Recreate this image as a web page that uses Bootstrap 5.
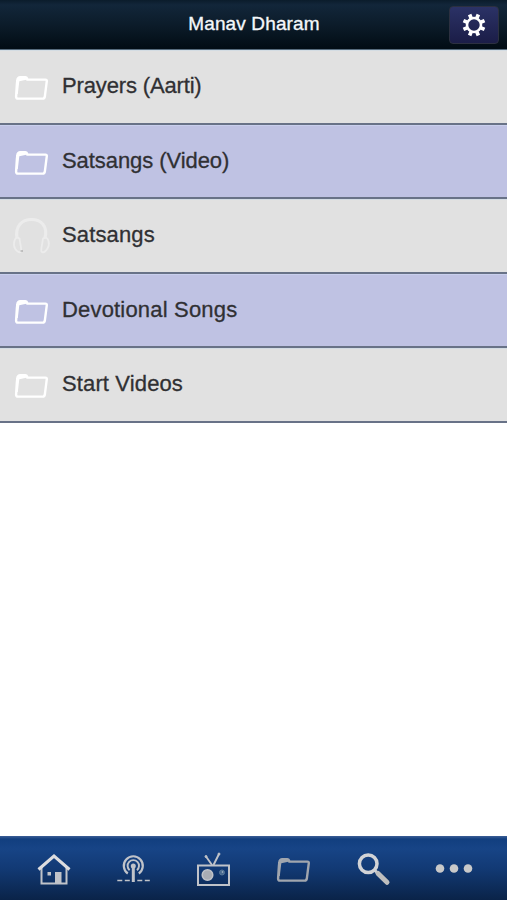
<!DOCTYPE html>
<html lang="en">
<head>
<meta charset="utf-8">
<meta name="viewport" content="width=device-width, initial-scale=1">
<title>Manav Dharam</title>
<link rel="stylesheet" href="https://cdn.jsdelivr.net/npm/bootstrap@5.3.0/dist/css/bootstrap.min.css">
<style>
body{font-family:"Liberation Sans",Arial,sans-serif;background:#fff}
.topbar{height:50px;display:grid;grid-template-columns:1fr auto 1fr;background:linear-gradient(#0b1c2b 0,#12263a 10%,#0c1c2a 50%,#020d15 97%);color:#f4f7fa;padding:0 8px 0 9px;border-bottom:1px solid #566b7c}
.topbar h1{font-size:19px;line-height:24px;letter-spacing:.13px;margin:0 0 2px;font-weight:400;-webkit-text-stroke:.35px}
.gear{width:50px;height:38px;padding:0;border:1px solid #2c3040;border-radius:4px;background:linear-gradient(#2b3266,#1b1d47)}
.menu-row{height:74.5px;padding:1px 0 0 13px;border:0;border-bottom:2px solid #687287;background:#e1e1e1;color:#303033;font-size:22px;line-height:28px;box-shadow:inset 0 1px #d3dce3}
.menu-row+.menu-row{border-top-width:0}
.menu-row span{margin:0 0 1px 12px;-webkit-text-stroke:.3px;letter-spacing:.13px}
.menu-row .snug{letter-spacing:-.15px}
.menu-row .even{letter-spacing:-.07px}
.menu-row .airy{letter-spacing:.18px}
.menu-row.alt{background:#bfc2e3;box-shadow:inset 0 1px #c9cfed}
.tabs{height:64px;padding:1px 12px 0 14px;background:linear-gradient(#3c5f96 0,#123f7f 3px,#174486 20%,#123a75 50%,#0a2348 100%)}
.tabs a{color:#c0c3c9}
svg{display:block;overflow:visible}
</style>
<script src="https://cdn.jsdelivr.net/npm/bootstrap@5.3.0/dist/js/bootstrap.bundle.min.js"></script>
</head>
<body>
<svg width="0" height="0" class="position-absolute" aria-hidden="true">
<symbol id="folder" viewBox="0 0 37 37"><path d="M4.8 10.5q.2-3.4 3.2-3.4h4.6q1.8 0 2.3 2.5h18q1.6 0 1.400 1.600l-2 15.600q-.3 1.800-2 1.800H5.500q-2 0-1.900-2L4.400 14z" transform="translate(-.5 2)" fill="none" stroke="currentColor" stroke-width="2.400"/><path d="M4 13q0-4.600 4-4.600h4q2 0 2.500 3.200L6.300 13.200 4.800 26 3 26z" fill="currentColor"/></symbol>
</svg>
<div class="d-flex flex-column vh-100">
<header class="topbar align-items-center flex-shrink-0">
<span></span>
<h1>Manav Dharam</h1>
<button class="gear btn d-flex align-items-center justify-content-center ms-auto" aria-label="Settings">
<svg width="24" height="24" viewBox="-12 -12 24 24" fill="none" stroke="#fff"><circle r="7" stroke-width="2.600"/><g stroke-width="3.700"><path d="M0-7.300V-11.400M0 7.300V11.400M7.300 0H11.400M-7.300 0H-11.400" transform="rotate(22.5)"/><path d="M0-7.300V-11.400M0 7.300V11.400M7.300 0H11.400M-7.300 0H-11.400" transform="rotate(67.5)"/></g></svg>
</button>
</header>
<main class="flex-grow-1">
<div class="list-group rounded-0">
<a href="#" class="menu-row list-group-item d-flex align-items-center text-decoration-none"><svg width="37" height="37" color="#fff"><use href="#folder"/></svg><span class="snug">Prayers (Aarti)</span></a>
<a href="#" class="menu-row alt list-group-item d-flex align-items-center text-decoration-none"><svg width="37" height="37" color="#fff"><use href="#folder"/></svg><span class="even">Satsangs (Video)</span></a>
<a href="#" class="menu-row list-group-item d-flex align-items-center text-decoration-none"><svg width="37" height="37" viewBox="0 0 37 37" fill="none" stroke="#ececec"><path d="M4 21C2 9 9 2.500 18.500 2.500S35 9 32 21" stroke-width="3.200"/><path d="M6.500 21.500C1 18 0 28 2 31.500s5 4.500 6 3-1-8-1.500-13zM30 21.500c6-3.500 7 6 4.500 10s-5 4.500-6 3 1-8 1.500-13z" stroke-width="1.800"/><path d="M7.500 34h2.500" stroke="#999" stroke-width="1"/></svg><span>Satsangs</span></a>
<a href="#" class="menu-row alt list-group-item d-flex align-items-center text-decoration-none"><svg width="37" height="37" color="#fff"><use href="#folder"/></svg><span class="airy">Devotional Songs</span></a>
<a href="#" class="menu-row list-group-item d-flex align-items-center text-decoration-none"><svg width="37" height="37" color="#fff"><use href="#folder"/></svg><span>Start Videos</span></a>
</div>
</main>
<nav class="tabs d-flex align-items-center flex-shrink-0">
<a href="#" class="flex-fill d-flex justify-content-center" aria-label="Home"><svg width="36" height="36" viewBox="0 0 36 36" fill="none" stroke="currentColor"><path d="M5.500 16v16.500h25V16" stroke-width="2"/><path d="M2.500 18.500L18 5l15.500 13.500" stroke="#dddddf" stroke-width="3"/><path d="M19 21h6.500v11H19zM11.500 21h3.500v3.500h-3.500z" fill="currentColor" stroke="none"/></svg></a>
<a href="#" class="flex-fill d-flex justify-content-center" aria-label="Podcasts"><svg width="36" height="36" viewBox="0.7 0 36 36" fill="none" stroke="currentColor"><path d="M12.500 22.500A9.500 9.500 0 1 1 23.500 22.500" stroke-width="2.200"/><path d="M14.300 19.200A5.700 5.700 0 1 1 21.700 19.200" stroke-width="1.900"/><path d="M18 14v17" stroke-width="3"/><circle cx="18" cy="15" r="2.500" fill="currentColor" stroke="none"/><path d="M2 29.500h5M9.500 29.500h5M22 29.500h5M29.500 29.500h5" stroke-width="1.700"/></svg></a>
<a href="#" class="flex-fill d-flex justify-content-center" aria-label="Radio"><svg width="36" height="36" viewBox="0 0 36 36" fill="none" stroke="currentColor"><path d="M3 14.500h31v19.500H3z" stroke-width="2"/><path d="M17 14L11 5.500M18.500 14L24 3" stroke-width="1.900"/><circle cx="12.500" cy="24" r="5.300" fill="#a9adb4" stroke-width="1.500"/><circle cx="27" cy="21.500" r="2.500" fill="#496b91" stroke="#587797"/><circle cx="27.500" cy="21" r=".8" fill="#b9c3ce" stroke="none"/><circle cx="11" cy="5.500" r="1" fill="currentColor"/><circle cx="24" cy="3" r="1" fill="currentColor"/></svg></a>
<a href="#" class="flex-fill d-flex justify-content-center" aria-label="Folders"><svg width="37" height="37" color="#a1a6ae"><use href="#folder"/></svg></a>
<a href="#" class="flex-fill d-flex justify-content-center" aria-label="Search"><svg width="36" height="36" viewBox="1 0.5 36 36" fill="none" stroke="#d2d3d6"><circle cx="13.200" cy="13.200" r="8.800" stroke-width="3.500"/><path d="M19.500 19.500l4 4" stroke-width="3"/><path d="M23 23l9 8.800" stroke="#bebebe" stroke-width="5" stroke-linecap="round"/></svg></a>
<a href="#" class="flex-fill d-flex justify-content-center" aria-label="More"><svg width="38" height="36" viewBox="0 0 38 36" fill="#c9c9c9"><circle cx="5" cy="17.500" r="4.300"/><circle cx="19" cy="17.500" r="4.300"/><circle cx="33" cy="17.500" r="4.300"/></svg></a>
</nav>
</div>
</body>
</html>
